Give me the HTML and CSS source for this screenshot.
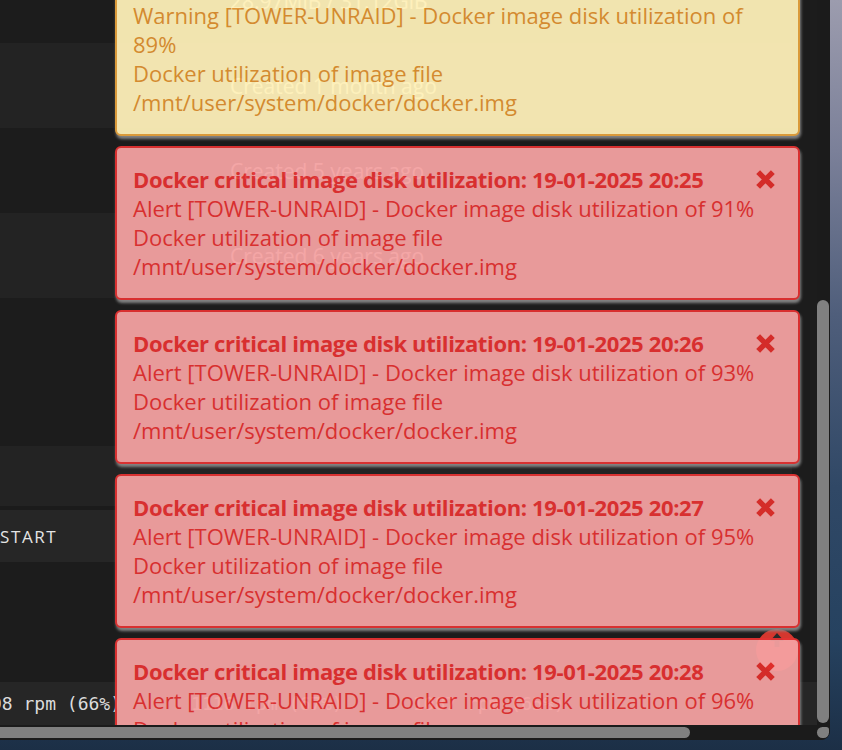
FILE: index.html
```html
<!DOCTYPE html>
<html>
<head>
    <title>Docker - Tower</title>
    <link rel="stylesheet" href="styles.css">
</head>
<body>
    <div class="window">
        <div class="viewport">
            <div class="page">
                <div class="row"><span class="cell">28.97MiB / 31.12GiB</span></div>
                <div class="row alt"><span class="cell">Created 1 month ago</span></div>
                <div class="row"><span class="cell">Created 5 years ago</span></div>
                <div class="row alt"><span class="cell">Created 6 years ago</span></div>
                <div class="row tall"></div>
                <div class="row bar"></div>
                <div class="row buttons"><span class="btn">START</span></div>
                <div class="row spacer"></div>
                <div class="footer">
                    <span class="fan first">98 rpm (66%)</span>
                    <span class="fan">1116 rpm (67%)</span>
                    <span class="fan">1087 rpm (65%)</span>
                </div>
            </div>

            <div class="to-top">
                <svg width="18" height="18" viewBox="0 0 18 18"><path d="M9 2 L16 10 H11.5 V16 H6.5 V10 H2 Z" fill="#2a2a2a"/></svg>
            </div>

            <div class="growl">
                <div class="note warn">
                    <div class="close"><svg width="21" height="21" viewBox="0 0 20 20"><path d="M3 3 L17 17 M17 3 L3 17" stroke="currentColor" stroke-width="5.2"/></svg></div>
                    <div class="title">Docker high image disk utilization: 19-01-2025 20:24</div>
                    <div>Warning [TOWER-UNRAID] - Docker image disk utilization of 89%</div>
                    <div>Docker utilization of image file /mnt/user/system/docker/docker.img</div>
                </div>
                <div class="note alert">
                    <div class="close"><svg width="21" height="21" viewBox="0 0 20 20"><path d="M3 3 L17 17 M17 3 L3 17" stroke="currentColor" stroke-width="5.2"/></svg></div>
                    <div class="title">Docker critical image disk utilization: 19-01-2025 20:25</div>
                    <div>Alert [TOWER-UNRAID] - Docker image disk utilization of 91%</div>
                    <div>Docker utilization of image file /mnt/user/system/docker/docker.img</div>
                </div>
                <div class="note alert">
                    <div class="close"><svg width="21" height="21" viewBox="0 0 20 20"><path d="M3 3 L17 17 M17 3 L3 17" stroke="currentColor" stroke-width="5.2"/></svg></div>
                    <div class="title">Docker critical image disk utilization: 19-01-2025 20:26</div>
                    <div>Alert [TOWER-UNRAID] - Docker image disk utilization of 93%</div>
                    <div>Docker utilization of image file /mnt/user/system/docker/docker.img</div>
                </div>
                <div class="note alert">
                    <div class="close"><svg width="21" height="21" viewBox="0 0 20 20"><path d="M3 3 L17 17 M17 3 L3 17" stroke="currentColor" stroke-width="5.2"/></svg></div>
                    <div class="title">Docker critical image disk utilization: 19-01-2025 20:27</div>
                    <div>Alert [TOWER-UNRAID] - Docker image disk utilization of 95%</div>
                    <div>Docker utilization of image file /mnt/user/system/docker/docker.img</div>
                </div>
                <div class="note alert">
                    <div class="close"><svg width="21" height="21" viewBox="0 0 20 20"><path d="M3 3 L17 17 M17 3 L3 17" stroke="currentColor" stroke-width="5.2"/></svg></div>
                    <div class="title">Docker critical image disk utilization: 19-01-2025 20:28</div>
                    <div>Alert [TOWER-UNRAID] - Docker image disk utilization of 96%</div>
                    <div>Docker utilization of image file /mnt/user/system/docker/docker.img</div>
                </div>
            </div>
        </div>
        <div class="vscroll"><div class="vthumb"></div></div>
        <div class="hscroll"><div class="hthumb"></div></div>
        <div class="corner"><div class="grip"></div></div>
    </div>
</body>
</html>
```

FILE: styles.css
```css
* {
    box-sizing: border-box;
}
body {
    margin: 0;
    width: 842px;
    height: 750px;
    overflow: hidden;
    font-family: "Open Sans", "Noto Sans", sans-serif;
    background: linear-gradient(180deg, #9c9cae 0%, #7b8099 20%, #4f5e7b 42%, #304866 65%, #264260 85%, #1c2f46 100%);
}

/* browser window */
.window {
    width: 830px;
    height: 740px;
    background: #1b1b1b;
    border-bottom-right-radius: 9px;
    overflow: hidden;
    display: grid;
    grid-template-columns: 817px 13px;
    grid-template-rows: 725px 15px;
}
.viewport {
    position: relative;
    overflow: hidden;
    background: #1c1c1c;
}
.page {
    margin-top: -42px;
}
.row {
    width: 792px;
    height: 85px;
    display: flex;
    align-items: center;
    padding-left: 230px;
    color: #f0f0f0;
    font-size: 21px;
    background: #1c1c1c;
}
.row.alt {
    background: #232323;
}
.row.tall {
    height: 148px;
}
.row.bar {
    background: #232323;
    border-bottom: 4px solid #1b1b1b;
    height: 64px;
}
.row.buttons {
    height: 52px;
    padding-left: 0;
    background: #262626;
}
.btn {
    color: #e4e4e4;
    font-size: 17px;
    letter-spacing: 1.6px;
}
.row.spacer {
    height: 120px;
}
.footer {
    height: 43px;
    background: #262626;
    display: flex;
    align-items: center;
    gap: 70px;
    font-family: "DejaVu Sans Mono", monospace;
    font-size: 18px;
    color: #dcdcdc;
}
.fan.first {
    margin-left: -9px;
}

/* scrollbars */
.vscroll {
    background: #1b1b1b;
    padding-top: 300px;
}
.vthumb {
    width: 12px;
    height: 423px;
    background: #808080;
    border-radius: 6px;
}
.hscroll {
    background: #1b1b1b;
    padding-top: 2px;
}
.hthumb {
    width: 690px;
    height: 11px;
    background: #808080;
    border-radius: 0 6px 6px 0;
}
.corner {
    background: #1b1b1b;
    padding-top: 2px;
}
.grip {
    width: 12px;
    height: 11px;
    background: #808080;
    border-radius: 6px 3px 6px 6px;
}

/* back to top button, sits under the notifications */
.to-top {
    position: absolute;
    left: 756px;
    top: 629px;
    width: 42px;
    height: 42px;
    border-radius: 50%;
    background: #d5372e;
    display: flex;
    align-items: flex-start;
    justify-content: center;
    padding-top: 2px;
    z-index: 1;
}

/* notifications */
.growl {
    position: absolute;
    left: 115px;
    top: -47px;
    width: 685px;
    display: flex;
    flex-direction: column;
    gap: 10px;
    z-index: 2;
}
.note {
    border: 2px solid;
    border-radius: 6px;
    padding: 17px 22px 17px 16px;
    font-size: 22px;
    line-height: 29px;
    opacity: .94;
    box-shadow: 1px 3px 3px #8a8a8a;
}
.note.warn {
    background: #fff1b9;
    border-color: #e6a23c;
    color: #e09131;
}
.note.alert {
    background: #f5a2a2;
    border-color: #e43232;
    color: #e43131;
}
.note .title {
    font-weight: bold;
    letter-spacing: -0.35px;
}
.close {
    float: right;
    height: 29px;
    display: flex;
    align-items: center;
    color: #e02e2a;
}
```
